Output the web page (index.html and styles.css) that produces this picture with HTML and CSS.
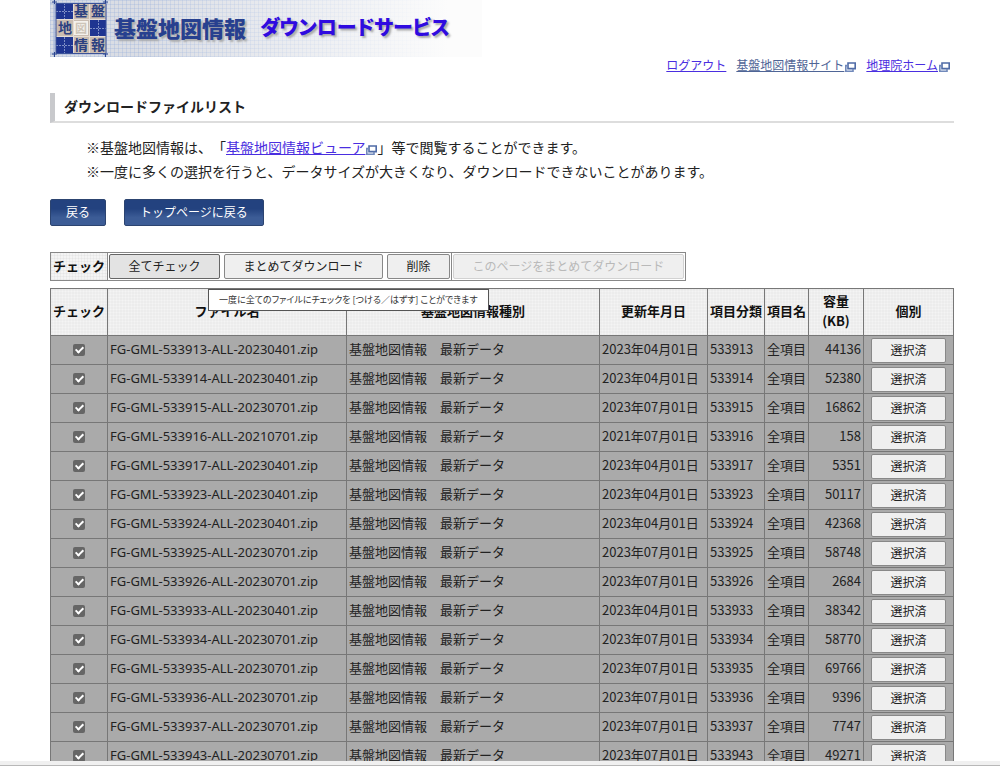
FILE: index.html
```html
<!DOCTYPE html>
<html lang="ja">
<head>
  <meta charset="UTF-8">
  <meta name="viewport" content="width=device-width, initial-scale=1.0">
  <title>基盤地図情報 ダウンロードサービス</title>
  <link rel="stylesheet" href="styles.css">
</head>
<body>
  <svg width="0" height="0" class="defs" aria-hidden="true">
    <symbol id="newwin" viewBox="0 0 11 10">
      <path d="M3 1h7.2v5.6H3z" fill="#fff" stroke="#4f6ba6" stroke-width="1.6"/>
      <path d="M3 3.6H.8v5.6H8V6.8" fill="none" stroke="#7189bb" stroke-width="1.6"/>
    </symbol>
  </svg>

  <div class="page">
    <header>
      <div class="banner">
        <svg class="logo" width="58" height="57" viewBox="0 0 58 57" role="img" aria-label="基盤地図情報">
          <path d="M4 0v57M55 0v57M0 3h58M0 54h58" stroke="#9fb0d6" stroke-width="1"/>
          <path d="M2 54h5M4.500 52v5M53 54h5M55.500 52v5M2 2h5M4.500 0v4M53 2h5M55.500 0v4" stroke="#2b4590" stroke-width="1"/>
          <rect x="6" y="3" width="50" height="50" fill="#c9bcb1"/>
          <g fill="#1f3591">
            <rect x="6" y="3" width="17" height="16"/>
            <rect x="40" y="20" width="16" height="16"/>
            <rect x="6" y="37" width="17" height="16"/>
          </g>
          <rect x="24" y="21" width="14" height="14" fill="#f4f1ec"/>
          <path d="M14.500 3v16M6 11.500h17M48.500 20v16M40 28.500h16M14.500 37v16M6 45.500h17" stroke="#7f8fc6" stroke-width="1" stroke-dasharray="2 1"/>
          <path d="M6 19.500h50M6 36.500h50M23.500 3v50M39.500 3v50" stroke="#e4dcd4"/>
          <g class="logo-text">
            <text x="31" y="16">基</text>
            <text x="48" y="16">盤</text>
            <text x="15" y="33">地</text>
            <text x="31" y="33" class="pale">図</text>
            <text x="31" y="50">情</text>
            <text x="48" y="50">報</text>
          </g>
          <path d="M6 3.500h50v50h-50z" fill="none" stroke="#3c5399"/>
        </svg>
        <span class="name">基盤地図情報</span>
        <span class="service">ダウンロードサービス</span>
      </div>
      <nav>
        <a href="#">ログアウト</a>
        <span><a href="#" class="visited">基盤地図情報サイト</a><svg class="newwin"><use href="#newwin"/></svg></span>
        <span><a href="#">地理院ホーム</a><svg class="newwin"><use href="#newwin"/></svg></span>
      </nav>
    </header>

    <main>
      <h1>ダウンロードファイルリスト</h1>

      <div class="notes">
        <p>※基盤地図情報は、「<a href="#">基盤地図情報ビューア</a><svg class="newwin"><use href="#newwin"/></svg>」等で閲覧することができます。</p>
        <p>※一度に多くの選択を行うと、データサイズが大きくなり、ダウンロードできないことがあります。</p>
      </div>

      <div class="nav-buttons">
        <button type="button">戻る</button>
        <button type="button">トップページに戻る</button>
      </div>

      <div class="toolbar">
        <div class="label">チェック</div>
        <div class="group">
          <button type="button" class="btn all">全てチェック</button>
          <button type="button" class="btn bulk">まとめてダウンロード</button>
          <button type="button" class="btn delete">削除</button>
        </div>
        <div class="group">
          <button type="button" class="btn bulk-page" disabled>このページをまとめてダウンロード</button>
        </div>
        <div class="tooltip" role="tooltip">一度に全てのファイルにチェックを [つける／はずす] ことができます</div>
      </div>

      <table class="files">
        <colgroup>
          <col class="c-check"><col class="c-file"><col><col class="c-date"><col class="c-code"><col class="c-item"><col class="c-size"><col class="c-select">
        </colgroup>
        <thead>
          <tr><th>チェック</th><th>ファイル名</th><th>基盤地図情報種別</th><th>更新年月日</th><th>項目分類</th><th>項目名</th><th>容量<br>(KB)</th><th>個別</th></tr>
        </thead>
        <tbody>
          <tr><td><input type="checkbox" aria-label="533913" checked></td><td>FG-GML-533913-ALL-20230401.zip</td><td>基盤地図情報　最新データ</td><td>2023年04月01日</td><td>533913</td><td>全項目</td><td>44136</td><td><button type="button" class="btn">選択済</button></td></tr>
          <tr><td><input type="checkbox" aria-label="533914" checked></td><td>FG-GML-533914-ALL-20230401.zip</td><td>基盤地図情報　最新データ</td><td>2023年04月01日</td><td>533914</td><td>全項目</td><td>52380</td><td><button type="button" class="btn">選択済</button></td></tr>
          <tr><td><input type="checkbox" aria-label="533915" checked></td><td>FG-GML-533915-ALL-20230701.zip</td><td>基盤地図情報　最新データ</td><td>2023年07月01日</td><td>533915</td><td>全項目</td><td>16862</td><td><button type="button" class="btn">選択済</button></td></tr>
          <tr><td><input type="checkbox" aria-label="533916" checked></td><td>FG-GML-533916-ALL-20210701.zip</td><td>基盤地図情報　最新データ</td><td>2021年07月01日</td><td>533916</td><td>全項目</td><td>158</td><td><button type="button" class="btn">選択済</button></td></tr>
          <tr><td><input type="checkbox" aria-label="533917" checked></td><td>FG-GML-533917-ALL-20230401.zip</td><td>基盤地図情報　最新データ</td><td>2023年04月01日</td><td>533917</td><td>全項目</td><td>5351</td><td><button type="button" class="btn">選択済</button></td></tr>
          <tr><td><input type="checkbox" aria-label="533923" checked></td><td>FG-GML-533923-ALL-20230401.zip</td><td>基盤地図情報　最新データ</td><td>2023年04月01日</td><td>533923</td><td>全項目</td><td>50117</td><td><button type="button" class="btn">選択済</button></td></tr>
          <tr><td><input type="checkbox" aria-label="533924" checked></td><td>FG-GML-533924-ALL-20230401.zip</td><td>基盤地図情報　最新データ</td><td>2023年04月01日</td><td>533924</td><td>全項目</td><td>42368</td><td><button type="button" class="btn">選択済</button></td></tr>
          <tr><td><input type="checkbox" aria-label="533925" checked></td><td>FG-GML-533925-ALL-20230701.zip</td><td>基盤地図情報　最新データ</td><td>2023年07月01日</td><td>533925</td><td>全項目</td><td>58748</td><td><button type="button" class="btn">選択済</button></td></tr>
          <tr><td><input type="checkbox" aria-label="533926" checked></td><td>FG-GML-533926-ALL-20230701.zip</td><td>基盤地図情報　最新データ</td><td>2023年07月01日</td><td>533926</td><td>全項目</td><td>2684</td><td><button type="button" class="btn">選択済</button></td></tr>
          <tr><td><input type="checkbox" aria-label="533933" checked></td><td>FG-GML-533933-ALL-20230401.zip</td><td>基盤地図情報　最新データ</td><td>2023年04月01日</td><td>533933</td><td>全項目</td><td>38342</td><td><button type="button" class="btn">選択済</button></td></tr>
          <tr><td><input type="checkbox" aria-label="533934" checked></td><td>FG-GML-533934-ALL-20230701.zip</td><td>基盤地図情報　最新データ</td><td>2023年07月01日</td><td>533934</td><td>全項目</td><td>58770</td><td><button type="button" class="btn">選択済</button></td></tr>
          <tr><td><input type="checkbox" aria-label="533935" checked></td><td>FG-GML-533935-ALL-20230701.zip</td><td>基盤地図情報　最新データ</td><td>2023年07月01日</td><td>533935</td><td>全項目</td><td>69766</td><td><button type="button" class="btn">選択済</button></td></tr>
          <tr><td><input type="checkbox" aria-label="533936" checked></td><td>FG-GML-533936-ALL-20230701.zip</td><td>基盤地図情報　最新データ</td><td>2023年07月01日</td><td>533936</td><td>全項目</td><td>9396</td><td><button type="button" class="btn">選択済</button></td></tr>
          <tr><td><input type="checkbox" aria-label="533937" checked></td><td>FG-GML-533937-ALL-20230701.zip</td><td>基盤地図情報　最新データ</td><td>2023年07月01日</td><td>533937</td><td>全項目</td><td>7747</td><td><button type="button" class="btn">選択済</button></td></tr>
          <tr><td><input type="checkbox" aria-label="533943" checked></td><td>FG-GML-533943-ALL-20230701.zip</td><td>基盤地図情報　最新データ</td><td>2023年07月01日</td><td>533943</td><td>全項目</td><td>49271</td><td><button type="button" class="btn">選択済</button></td></tr>
        </tbody>
      </table>
    </main>
  </div>
  <div class="bottom-bar"></div>
</body>
</html>
```
FILE: styles.css
```css
*,
*::after {
  box-sizing: border-box;
}

body {
  margin: 0;
  height: 100vh;
  display: flex;
  flex-direction: column;
  font-family: "Noto Sans CJK JP", sans-serif;
  font-size: 13px;
  color: #222;
  background: #fff;
}

button {
  font-family: inherit;
  font-size: 12px;
  line-height: 18px;
}

a {
  color: #4a2ee0;
}

a.visited {
  color: #4f6596;
}

.defs {
  position: absolute;
}

.page {
  flex: 1;
  min-height: 0;
  overflow-y: auto;
  scrollbar-width: none;
  padding: 0 46px 0 50px;
}

.bottom-bar {
  flex: none;
  height: 5px;
  background: #f0f0f0;
  border-bottom: 1px solid #b8b8b8;
}

/* header */
.banner {
  display: flex;
  align-items: center;
  width: 432px;
  height: 57px;
  background:
    linear-gradient(90deg, rgba(255,255,255,0) 20%, #fcfcfc 92%),
    repeating-linear-gradient(90deg, rgba(150,175,220,0.3) 0 1px, transparent 1px 4px),
    repeating-linear-gradient(0deg, rgba(150,175,220,0.3) 0 1px, transparent 1px 4px),
    #dadde4;
}

.logo {
  flex: none;
}

.logo-text text {
  font-size: 14px;
  font-weight: bold;
  fill: #2b4080;
  text-anchor: middle;
}

.logo-text .pale {
  font-size: 12px;
  fill: #cdc4b8;
}

.name,
.service {
  padding-bottom: 4px;
  font-size: 22px;
  font-weight: 900;
  line-height: 32px;
  white-space: nowrap;
  text-shadow: 2px 2px 2px #aaa;
}

.name {
  margin-left: 6px;
  color: #27408f;
}

.service {
  margin-left: 14px;
  color: #2f0be0;
  font-size: 20px;
  font-feature-settings: "palt";
}

nav {
  display: flex;
  justify-content: flex-end;
  gap: 10px;
  padding-right: 4px;
  font-size: 12px;
  line-height: 16px;
}

.newwin {
  width: 11px;
  height: 10px;
  margin-left: 1px;
  vertical-align: -2px;
}

/* heading and notes */
h1 {
  margin: 20px 0 12px;
  padding: 0 0 2px 9px;
  border-left: 5px solid #c8c9cc;
  border-bottom: 2px solid #ddd;
  font-size: 14px;
  line-height: 26px;
}

.notes {
  padding-left: 36px;
  font-size: 14px;
  line-height: 24px;
  text-spacing-trim: space-all;
}

.notes p {
  margin: 0;
}

.nav-buttons {
  display: flex;
  gap: 18px;
  margin: 16px 0 26px;
}

.nav-buttons button {
  height: 27px;
  padding: 0 15px 2px;
  border: 1px solid #2c4470;
  border-radius: 2px;
  background: linear-gradient(#23427f 35%, #3c5c96 70%);
  color: #fff;
}

/* toolbar */
.toolbar {
  position: relative;
  display: flex;
  width: fit-content;
  border: 1px solid #888;
}

.label,
th {
  background:
    repeating-linear-gradient(90deg, rgba(0,0,0,0.03) 0 1px, transparent 1px 3px),
    repeating-linear-gradient(0deg, rgba(0,0,0,0.03) 0 1px, transparent 1px 3px),
    #f4f4f4;
  font-weight: bold;
  color: #111;
}

.label {
  width: 56px;
  line-height: 25px;
  text-align: center;
}

.group {
  display: flex;
  gap: 4px;
  padding: 1px;
  border-left: 1px solid #888;
}

.btn {
  height: 25px;
  padding: 0 0 1px;
  border: 1px solid #888;
  border-radius: 2px;
  background: #efefef;
  color: #222;
}

.all {
  width: 111px;
  background: #e3e3e3;
  border-color: #666;
}

.bulk {
  width: 159px;
}

.delete {
  width: 63px;
}

.bulk-page {
  width: 231px;
}

.btn:disabled {
  color: #b9b9b9;
  border-color: #d2d2d2;
}

.tooltip {
  position: absolute;
  left: 157px;
  top: 36px;
  padding: 0 10px;
  border: 1px solid #555;
  background: #fff;
  color: #333;
  font-size: 9px;
  line-height: 20px;
  white-space: nowrap;
  font-feature-settings: "palt";
}

/* file list */
.files {
  width: 100%;
  margin-top: 7px;
  table-layout: fixed;
  border-collapse: collapse;
}

.c-check { width: 57px; }
.c-file { width: 239px; }
.c-date { width: 108px; }
.c-code { width: 57px; }
.c-item { width: 44px; }
.c-size { width: 55px; }
.c-select { width: 90px; }

th,
td {
  border: 1px solid #777;
  padding: 0 2px 2px;
  white-space: nowrap;
}

th {
  height: 47px;
  padding: 0 0 2px;
  line-height: 20px;
}

td {
  height: 29px;
  background: #aaa;
  line-height: 20px;
}

td:first-child,
td:last-child {
  padding-bottom: 0;
  text-align: center;
}

td:nth-child(2) {
  font-family: "Noto Sans", sans-serif;
}

td:nth-child(7) {
  text-align: right;
}

td .btn {
  display: block;
  width: 75px;
  margin: 0 auto;
}

input[type="checkbox"] {
  appearance: none;
  display: block;
  position: relative;
  width: 12px;
  height: 12px;
  margin: 0 auto;
  border-radius: 2px;
  background: #666;
}

input[type="checkbox"]:checked::after {
  content: "";
  position: absolute;
  left: 4px;
  top: 1px;
  width: 5px;
  height: 8px;
  border: solid #fff;
  border-width: 0 2px 2px 0;
  transform: rotate(45deg);
}
```
